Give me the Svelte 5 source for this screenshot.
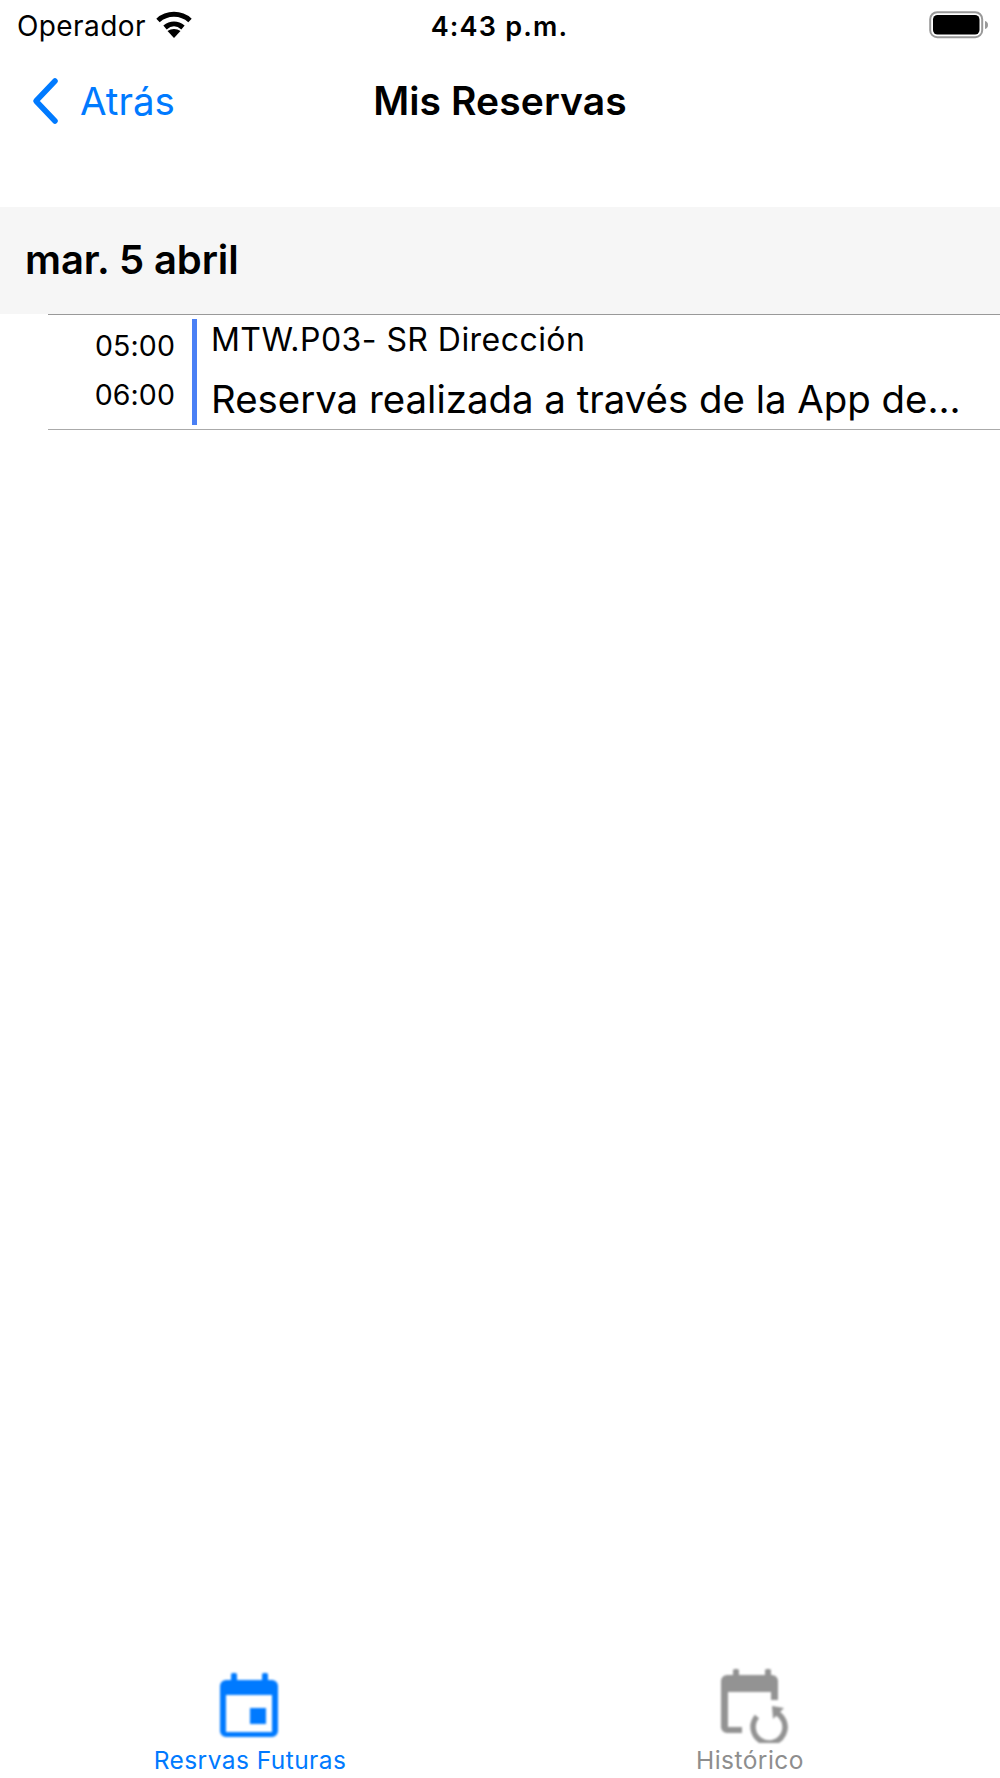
<script>
  const reservas = [
    { inicio: '05:00', fin: '06:00', sala: 'MTW.P03- SR Dirección', asunto: 'Reserva realizada a través de la App de...' }
  ];
</script>

<div class="page">
  <header class="status">
    <div class="status-left">
      <span class="carrier">Operador</span>
      <svg class="wifi" viewBox="0 0 36 27" width="36" height="27">
        <path d="M18 27l-6.500-7c3.800-2.800 9.200-2.800 13 0z" fill="#000"/>
        <path d="M9 16.500c5.500-4.800 12.500-4.800 18 0" fill="none" stroke="#000" stroke-width="5"/>
        <path d="M2 9.500C11 1.300 25 1.300 34 9.500" fill="none" stroke="#000" stroke-width="5"/>
      </svg>
    </div>
    <div class="clock">4:43 p.m.</div>
    <div class="status-right">
      <svg class="battery" viewBox="0 0 60 28" width="60" height="28">
        <rect x="1.200" y="1.200" width="52" height="25" rx="7" fill="none" stroke="#999" stroke-width="2"/>
        <rect x="4" y="4" width="46.500" height="19.500" rx="4.500" fill="#000"/>
        <path d="M56 10c2 .5 3 2 3 4s-1 3.500-3 4z" fill="#999"/>
      </svg>
    </div>
  </header>

  <nav class="navbar">
    <div class="back">
      <svg class="chevron" viewBox="0 0 30 48" width="30" height="48">
        <path d="M25 4L6 24l19 20" fill="none" stroke="#007aff" stroke-width="5.500" stroke-linecap="round" stroke-linejoin="round"/>
      </svg>
      <span>Atrás</span>
    </div>
    <h1>Mis Reservas</h1>
  </nav>

  <main class="content">
    <section>
      <h2 class="day">mar. 5 abril</h2>
      <ul class="list">
        {#each reservas as r}
          <li class="row">
            <div class="times">
              <span>{r.inicio}</span>
              <span>{r.fin}</span>
            </div>
            <div class="bar"></div>
            <div class="info">
              <div class="room">{r.sala}</div>
              <div class="subject">{r.asunto}</div>
            </div>
          </li>
        {/each}
      </ul>
    </section>
  </main>

  <footer class="tabs">
    <div class="tab active">
      <svg class="tab-icon" viewBox="0 0 60 66" width="60" height="66">
        <rect x="12" y="1" width="6" height="10" rx="1.500" fill="#007aff"/>
        <rect x="43" y="1" width="6" height="10" rx="1.500" fill="#007aff"/>
        <path fill-rule="evenodd" fill="#007aff" d="M7 8h46a6 6 0 0 1 6 6v45a6 6 0 0 1-6 6H7a6 6 0 0 1-6-6V14a6 6 0 0 1 6-6zM7 23v37h46V23z"/>
        <rect x="31" y="36" width="16" height="16" fill="#007aff"/>
      </svg>
      <span>Resrvas Futuras</span>
    </div>
    <div class="tab history">
      <svg class="tab-icon" viewBox="0 0 67 74" width="67" height="74">
        <rect x="12" y="0" width="6" height="10" rx="1.500" fill="#939393"/>
        <rect x="44" y="0" width="6" height="10" rx="1.500" fill="#939393"/>
        <path fill="#939393" d="M6 6h45a6 6 0 0 1 6 6v19h-7V23H7v35h14v6H6a6 6 0 0 1-6-6V12a6 6 0 0 1 6-6z"/>
        <path d="M53 42.800A16 16 0 1 1 36 47.500" fill="none" stroke="#939393" stroke-width="5.500"/>
        <path d="M51 37l12 2-11 11z" fill="#939393"/>
      </svg>
      <span>Histórico</span>
    </div>
  </footer>
</div>

<style>
  :global(body) {
    margin: 0;
    background: #fff;
  }

  .page {
    width: 1000px;
    height: 1778px;
    display: flex;
    flex-direction: column;
    font-family: Inter, "Liberation Sans", sans-serif;
    color: #000;
    overflow: hidden;
  }

  .status {
    height: 52px;
    display: grid;
    grid-template-columns: 1fr auto 1fr;
    align-items: center;
    padding: 0 11px 0 17px;
    box-sizing: border-box;
  }

  .status-left {
    display: flex;
    align-items: center;
    gap: 10px;
  }

  .carrier {
    font-size: 28px;
    letter-spacing: 0.400px;
  }

  .wifi {
    margin-top: -4px;
  }

  .clock {
    font-size: 27px;
    font-weight: 600;
    letter-spacing: 1.200px;
    margin-right: 7px;
  }

  .status-right {
    display: flex;
    justify-content: flex-end;
  }

  .battery {
    margin-top: -2px;
  }

  .navbar {
    height: 88px;
    padding-top: 9px;
    box-sizing: border-box;
    display: grid;
    grid-template-columns: 1fr auto 1fr;
    align-items: center;
  }

  .back {
    margin-left: 30px;
    display: flex;
    align-items: center;
    gap: 20px;
    color: #007aff;
    font-size: 38.500px;
  }

  .chevron {
    flex: none;
  }

  h1 {
    margin: 0;
    font-size: 39px;
    font-weight: 600;
    letter-spacing: 0.100px;
  }

  .content {
    flex: 1;
    padding-top: 67px;
  }

  .day {
    margin: 0;
    height: 107px;
    box-sizing: border-box;
    padding: 0 0 2px 25px;
    background: #f6f6f6;
    display: flex;
    align-items: center;
    font-size: 40px;
    font-weight: 600;
    letter-spacing: -0.100px;
  }

  .list {
    list-style: none;
    margin: 0 0 0 48px;
    padding: 0;
    border-top: 1px solid #999;
    border-bottom: 1px solid #aaa;
  }

  .row {
    height: 106px;
    padding: 4px 0;
    display: flex;
  }

  .times {
    width: 127px;
    display: flex;
    flex-direction: column;
    align-items: flex-end;
    justify-content: center;
    gap: 15px;
    font-size: 28.500px;
    line-height: 34px;
    padding-bottom: 3px;
    box-sizing: border-box;
    margin-right: 17px;
    letter-spacing: 0.100px;
  }

  .bar {
    width: 5px;
    background: #4a80f5;
  }

  .info {
    margin-left: 14px;
    padding-top: 2px;
    min-width: 0;
  }

  .room {
    font-size: 32px;
    line-height: 38px;
    letter-spacing: 0.450px;
  }

  .subject {
    font-size: 38.400px;
    line-height: 46px;
    margin-top: 17px;
    white-space: nowrap;
  }

  .tabs {
    height: 137px;
    display: grid;
    grid-template-columns: 1fr 1fr;
    font-size: 24.500px;
    font-weight: 400;
    letter-spacing: 0.450px;
    color: #8e8e8e;
  }

  .tab {
    display: flex;
    flex-direction: column;
    align-items: center;
    justify-content: flex-end;
    padding-bottom: 4px;
  }

  .tab.active {
    color: #007aff;
  }

  .tab span {
    line-height: 28px;
  }

  .tab-icon {
    filter: blur(0.8px);
  }

  .active .tab-icon {
    margin: 0 2px 8px 0;
  }

  .history .tab-icon {
    margin: 0 0 3px 9px;
  }
</style>
